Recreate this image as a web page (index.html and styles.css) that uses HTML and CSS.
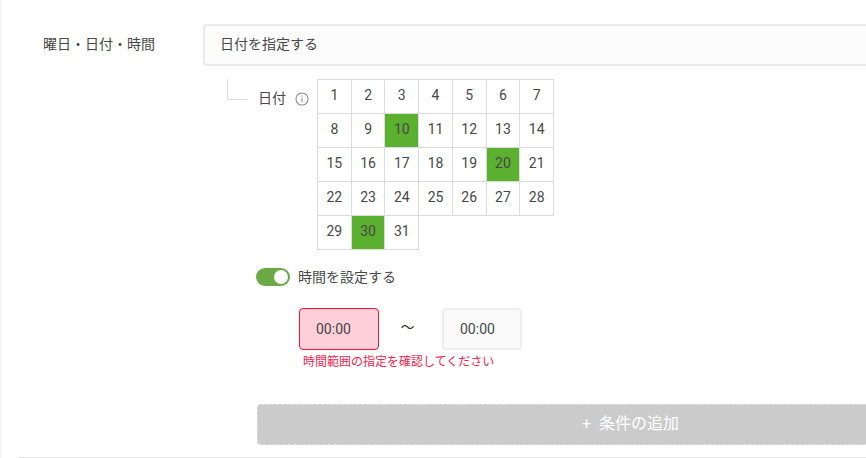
FILE: index.html
```html
<!DOCTYPE html>
<html lang="ja">
<head>
<meta charset="utf-8">
<title>条件</title>
<link rel="stylesheet" href="styles.css">
</head>
<body>
<main class="panel">
  <section class="row-main">
    <div class="row-label">曜日・日付・時間</div>
    <div class="select">日付を指定する</div>
  </section>
  <section class="sub">
    <div class="date-row">
      <span class="elbow"></span>
      <span class="date-label">日付</span>
      <svg class="info" viewBox="0 0 14 14" width="16" height="16" aria-hidden="true">
        <circle cx="7" cy="7" r="5.3" fill="none" stroke="#8a8a8a" stroke-width="0.9"/>
        <rect x="6.55" y="6.2" width="0.9" height="3.8" fill="#8a8a8a"/>
        <rect x="6.55" y="4" width="0.9" height="1.1" fill="#8a8a8a"/>
      </svg>
      <div class="calendar">
        <div class="day">1</div><div class="day">2</div><div class="day">3</div><div class="day">4</div><div class="day">5</div><div class="day">6</div><div class="day">7</div>
        <div class="day">8</div><div class="day">9</div><div class="day on">10</div><div class="day">11</div><div class="day">12</div><div class="day">13</div><div class="day">14</div>
        <div class="day">15</div><div class="day">16</div><div class="day">17</div><div class="day">18</div><div class="day">19</div><div class="day on">20</div><div class="day">21</div>
        <div class="day">22</div><div class="day">23</div><div class="day">24</div><div class="day">25</div><div class="day">26</div><div class="day">27</div><div class="day">28</div>
        <div class="day">29</div><div class="day on">30</div><div class="day">31</div>
      </div>
    </div>
    <div class="toggle-row">
      <span class="toggle"><span class="knob"></span></span>
      <span class="toggle-label">時間を設定する</span>
    </div>
    <div class="time-row">
      <div class="time time-error">00:00</div>
      <span class="tilde">〜</span>
      <div class="time">00:00</div>
    </div>
    <p class="error">時間範囲の指定を確認してください</p>
    <div class="add">+ 条件の追加</div>
  </section>
  <div class="rule"></div>
</main>
</body>
</html>
```
FILE: styles.css
```css
* { box-sizing: border-box; }
html, body { margin: 0; height: 458px; overflow: hidden; background: #fff; }
body {
  font-family: Roboto, "Noto Sans CJK JP", sans-serif;
  color: #484848;
  font-size: 14px;
}
.panel {
  width: 866px;
  height: 458px;
  padding-top: 24px;
  border-left: 2px solid #f5f5f5;
}
.row-main { display: flex; align-items: center; height: 42px; }
.row-label { width: 201px; padding: 0 0 2px 41px; font-size: 14px; line-height: 40px; }
.select {
  flex: 1;
  height: 42px;
  line-height: 36px;
  padding-left: 15px;
  background: #fcfcfc;
  border: 2px solid #ebebeb;
  border-right: 0;
  border-radius: 4px 0 0 4px;
  font-size: 14px;
}
.sub { padding-left: 225px; }
.date-row { display: flex; align-items: flex-start; padding-top: 13px; height: 192px; }
.elbow {
  width: 20px;
  height: 21px;
  border-left: 1px solid #ddd;
  border-bottom: 1px solid #ddd;
}
.date-label { margin-left: 11px; margin-top: 10px; font-size: 14px; line-height: 18px; }
.info { margin-left: 8px; margin-top: 12px; }
.calendar {
  margin-left: 7px;
  display: grid;
  grid-template-columns: repeat(7, 33.72px);
  grid-auto-rows: 34px;
}
.day {
  display: flex;
  align-items: center;
  justify-content: center;
  width: calc(100% + 1px);
  height: 35px;
  border: 1px solid #dcdcdc;
  margin-right: -1px;
  font-size: 14px;
  padding-bottom: 3px;
}
.on { background: #5bb030; }
.toggle-row { display: flex; align-items: center; height: 20px; margin-top: 9px; padding-left: 29px; }
.toggle {
  display: flex;
  justify-content: flex-end;
  align-items: center;
  width: 34px;
  height: 18px;
  padding-right: 2px;
  border-radius: 9px;
  background: #6aa943;
}
.knob { width: 14px; height: 14px; border-radius: 50%; background: #fff; }
.toggle-label { margin-left: 8px; margin-top: -3px; font-size: 14px; }
.time-row { display: flex; align-items: center; height: 42px; margin-top: 21px; padding-left: 72px; }
.time {
  width: 80px;
  height: 42px;
  line-height: 38px;
  padding-left: 16px;
  background: #fafafa;
  border: 2px solid #eee;
  border-radius: 4px;
  font-size: 14px;
}
.time-error { background: #ffd0d9; border: 1px solid #f5123f; line-height: 40px; color: #444; }
.tilde { width: 63px; padding: 0 6px 4px 0; text-align: center; font-size: 14px; line-height: 20px; color: #333; }
.error {
  margin: 4px 0 0 76px;
  font-size: 12px;
  line-height: 16px;
  color: #f5264f;
}
.add {
  margin: 34px 0 0 30px;
  height: 41px;
  line-height: 37px;
  padding-left: 324px;
  border: 1px dashed #e0e0e0;
  border-right: 0;
  border-radius: 4px 0 0 4px;
  background: #cbcbcb;
  color: #fff;
  font-size: 16px;
  word-spacing: 4px;
}
.rule { margin: 12px 0 0 17px; height: 1px; background: #e4e4e4; }
```
